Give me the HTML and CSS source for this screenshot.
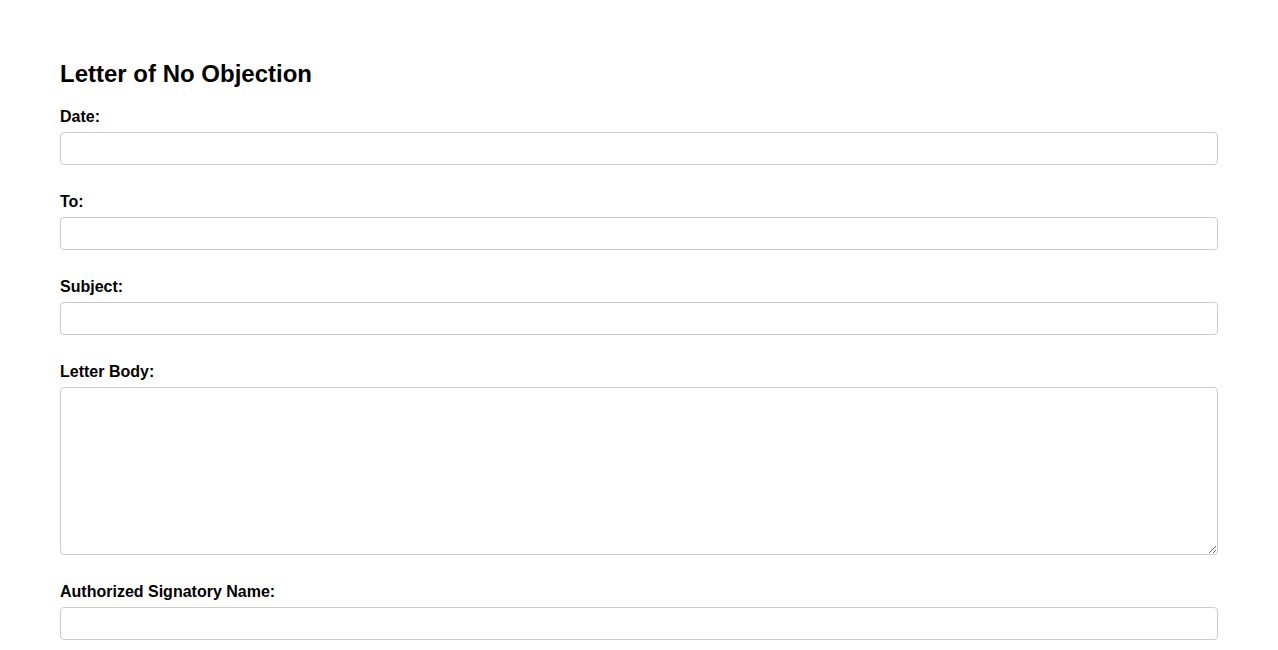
FILE: index.html
```html
<!DOCTYPE html>
<html lang="en">
<head>
<meta charset="utf-8">
<title>Letter of No Objection</title>
<link rel="stylesheet" href="styles.css">
</head>
<body>
<div class="page">
  <h2 class="title">Letter of No Objection</h2>
  <form class="form">
    <div class="field">
      <label class="label" for="date">Date:</label>
      <input class="input" id="date" type="text">
    </div>
    <div class="field">
      <label class="label" for="to">To:</label>
      <input class="input" id="to" type="text">
    </div>
    <div class="field">
      <label class="label" for="subject">Subject:</label>
      <input class="input" id="subject" type="text">
    </div>
    <div class="field">
      <label class="label" for="body">Letter Body:</label>
      <textarea class="input textarea" id="body"></textarea>
    </div>
    <div class="field">
      <label class="label" for="sign">Authorized Signatory Name:</label>
      <input class="input" id="sign" type="text">
    </div>
  </form>
</div>
</body>
</html>
```

FILE: styles.css
```css
html, body {
  margin: 0;
  padding: 0;
  background: #ffffff;
}

body {
  font-family: "Liberation Sans", Arial, sans-serif;
  color: #000000;
}

.page {
  padding: 40px 60px;
}

.title {
  font-size: 24px;
  font-weight: bold;
  line-height: 28px;
  margin: 20px 0 19px;
}

.form {
  display: flex;
  flex-direction: column;
  gap: 27px;
}

.field {
  display: flex;
  flex-direction: column;
}

.label {
  font-size: 16px;
  font-weight: bold;
  line-height: 18px;
  margin-top: 1px;
  margin-bottom: 6px;
}

.input {
  box-sizing: border-box;
  width: 100%;
  height: 33px;
  margin: 0;
  padding: 8px;
  border: 1px solid #cccccc;
  border-radius: 4px;
  font-family: "Liberation Sans", Arial, sans-serif;
  font-size: 14px;
  background: #ffffff;
}

.textarea {
  height: 168px;
  resize: vertical;
  display: block;
}
```
